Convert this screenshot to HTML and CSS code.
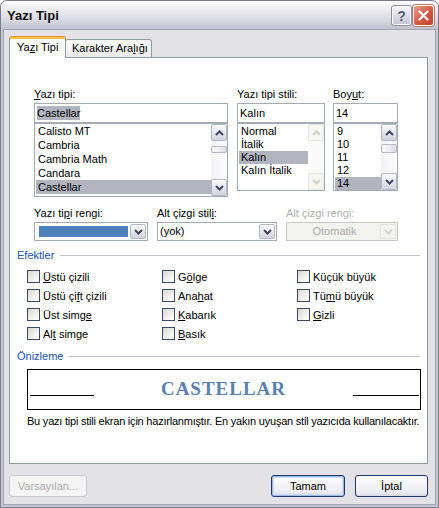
FILE: index.html
```html
<!DOCTYPE html>
<html lang="tr">
<head>
    <meta charset="UTF-8">
    <meta name="viewport" content="width=device-width, initial-scale=1.0">
    <title>Yazı Tipi</title>
    <link rel="stylesheet" href="styles.css">
</head>
<body>

<div class="window">
    <!-- Başlık çubuğu -->
    <div class="titlebar">
        <span class="title">Yazı Tipi</span>
        <div class="caption-buttons">
            <span class="cap-btn help">?</span>
            <span class="cap-btn close">
                <svg width="11" height="11" viewBox="0 0 11 11"><path d="M1.5 1.5 L9.5 9.5 M9.5 1.5 L1.5 9.5" stroke="#fff" stroke-width="2.2" stroke-linecap="round"/></svg>
            </span>
        </div>
    </div>

    <div class="client">
        <!-- Sekmeler -->
        <div class="tabs">
            <div class="tab active">Ya<u>z</u>ı Tipi</div>
            <div class="tab">Karakter Ara<u>l</u>ığı</div>
        </div>

        <div class="panel">
            <!-- Yazı tipi / stil / boyut -->
            <div class="font-pick">
                <div class="col col-font">
                    <label><u>Y</u>azı tipi:</label>
                    <div class="edit"><span class="sel-text">Castellar</span></div>
                    <div class="listbox list-font">
                        <div class="items">
                            <div class="item">Calisto MT</div>
                            <div class="item">Cambria</div>
                            <div class="item">Cambria Math</div>
                            <div class="item">Candara</div>
                            <div class="item selected">Castellar</div>
                        </div>
                        <div class="vscroll">
                            <div class="sb-btn"><svg width="9" height="6" viewBox="0 0 9 6"><path d="M1 5 L4.5 1.5 L8 5" fill="none" stroke="#3d4660" stroke-width="2"/></svg></div>
                            <div class="sb-track"><div class="sb-thumb thumb-font"></div></div>
                            <div class="sb-btn"><svg width="9" height="6" viewBox="0 0 9 6"><path d="M1 1 L4.5 4.5 L8 1" fill="none" stroke="#3d4660" stroke-width="2"/></svg></div>
                        </div>
                    </div>
                </div>

                <div class="col col-style">
                    <label>Yazı tipi stili:</label>
                    <div class="edit">Kalın</div>
                    <div class="listbox list-small">
                        <div class="items">
                            <div class="item">Normal</div>
                            <div class="item">İtalik</div>
                            <div class="item selected">Kalın</div>
                            <div class="item">Kalın İtalik</div>
                        </div>
                        <div class="vscroll disabled">
                            <div class="sb-btn"><svg width="9" height="6" viewBox="0 0 9 6"><path d="M1 5 L4.5 1.5 L8 5" fill="none" stroke="#cfd2c6" stroke-width="2"/></svg></div>
                            <div class="sb-track"></div>
                            <div class="sb-btn"><svg width="9" height="6" viewBox="0 0 9 6"><path d="M1 1 L4.5 4.5 L8 1" fill="none" stroke="#cfd2c6" stroke-width="2"/></svg></div>
                        </div>
                    </div>
                </div>

                <div class="col col-size">
                    <label>Boy<u>u</u>t:</label>
                    <div class="edit">14</div>
                    <div class="listbox list-small">
                        <div class="items">
                            <div class="item">9</div>
                            <div class="item">10</div>
                            <div class="item">11</div>
                            <div class="item">12</div>
                            <div class="item selected">14</div>
                        </div>
                        <div class="vscroll">
                            <div class="sb-btn"><svg width="9" height="6" viewBox="0 0 9 6"><path d="M1 5 L4.5 1.5 L8 5" fill="none" stroke="#3d4660" stroke-width="2"/></svg></div>
                            <div class="sb-track"><div class="sb-thumb thumb-size"></div></div>
                            <div class="sb-btn"><svg width="9" height="6" viewBox="0 0 9 6"><path d="M1 1 L4.5 4.5 L8 1" fill="none" stroke="#3d4660" stroke-width="2"/></svg></div>
                        </div>
                    </div>
                </div>
            </div>

            <!-- Renk ve alt çizgi -->
            <div class="combo-row">
                <div class="col col-color">
                    <label>Yazı ti<u>p</u>i rengi:</label>
                    <div class="combo">
                        <span class="swatch"></span>
                        <span class="drop-btn"><svg width="9" height="6" viewBox="0 0 9 6"><path d="M1 1 L4.5 4.5 L8 1" fill="none" stroke="#3d4660" stroke-width="2"/></svg></span>
                    </div>
                </div>
                <div class="col col-uline">
                    <label>Alt çizgi stil<u>i</u>:</label>
                    <div class="combo">
                        <span class="combo-text">(yok)</span>
                        <span class="drop-btn"><svg width="9" height="6" viewBox="0 0 9 6"><path d="M1 1 L4.5 4.5 L8 1" fill="none" stroke="#3d4660" stroke-width="2"/></svg></span>
                    </div>
                </div>
                <div class="col col-ucolor">
                    <label class="disabled-text">Alt çizgi rengi:</label>
                    <div class="combo disabled">
                        <span class="combo-text center">Otomatik</span>
                        <span class="drop-btn"><svg width="9" height="6" viewBox="0 0 9 6"><path d="M1 1 L4.5 4.5 L8 1" fill="none" stroke="#d4d4d4" stroke-width="2"/></svg></span>
                    </div>
                </div>
            </div>

            <!-- Efektler -->
            <div class="group-head head-effects"><span>Efektler</span><i class="rule"></i></div>
            <div class="effects">
                <div class="check"><span class="box"></span><span><u>Ü</u>stü çizili</span></div>
                <div class="check"><span class="box"></span><span>G<u>ö</u>lge</span></div>
                <div class="check"><span class="box"></span><span>Küçük büyük</span></div>
                <div class="check"><span class="box"></span><span>Üstü çi<u>f</u>t çizili</span></div>
                <div class="check"><span class="box"></span><span>Ana<u>h</u>at</span></div>
                <div class="check"><span class="box"></span><span>Tü<u>m</u>ü büyük</span></div>
                <div class="check"><span class="box"></span><span>Üst simg<u>e</u></span></div>
                <div class="check"><span class="box"></span><span><u>K</u>abarık</span></div>
                <div class="check"><span class="box"></span><span><u>G</u>izli</span></div>
                <div class="check"><span class="box"></span><span>Al<u>t</u> simge</span></div>
                <div class="check"><span class="box"></span><span><u>B</u>asık</span></div>
            </div>

            <!-- Önizleme -->
            <div class="group-head head-preview"><span>Önizleme</span><i class="rule"></i></div>
            <div class="preview">
                <span class="pv-line pv-left"></span>
                <span class="pv-text">CASTELLAR</span>
                <span class="pv-line pv-right"></span>
            </div>
            <p class="note">Bu yazı tipi stili ekran için hazırlanmıştır. En yakın uyuşan stil yazıcıda kullanılacaktır.</p>
        </div>

        <!-- Alt düğmeler -->
        <div class="buttons">
            <button class="btn btn-default" disabled>Varsayılan...</button>
            <span class="spacer"></span>
            <button class="btn btn-ok">Tamam</button>
            <button class="btn btn-cancel">İptal</button>
        </div>
    </div>
</div>

</body>
</html>
```

FILE: styles.css
```css
body {
    margin: 0;
    background: #fff;
    font-family: "Liberation Sans", Arial, sans-serif;
    font-size: 11px;
    color: #000;
}
u {
    text-decoration: underline;
    text-underline-offset: 1px;
}
.window {
    width: 439px;
    height: 508px;
    box-sizing: border-box;
    display: flex;
    flex-direction: column;
    background: #c6c6d2;
    border: 1px solid #7c7c8c;
    border-radius: 7px 7px 0 0;
    overflow: hidden;
}
.titlebar {
    height: 29px;
    flex: none;
    display: flex;
    align-items: center;
    padding: 0 4px 0 6px;
    background: linear-gradient(#fdfdfe 0%, #ececf1 30%, #d6d6df 70%, #bfbfcc 100%);
}
.title {
    flex: 1;
    font-family: "Liberation Sans", sans-serif;
    font-weight: bold;
    font-size: 13px;
    color: #111;
}
.caption-buttons {
    display: flex;
    gap: 1px;
}
.cap-btn {
    width: 21px;
    height: 21px;
    box-sizing: border-box;
    border-radius: 3px;
    display: flex;
    align-items: center;
    justify-content: center;
}
.help {
    border: 1px solid #8d8da3;
    background: linear-gradient(#f6f6fa, #c3c3d3);
    box-shadow: inset 0 0 0 1px #fff;
    font-family: "Liberation Sans", sans-serif;
    font-weight: bold;
    font-size: 14px;
    color: #55607c;
}
.close {
    border: 1px solid #fff;
    background: linear-gradient(135deg, #eba08e, #d2533f 60%, #c4453a);
    box-shadow: 0 0 0 1px #b07a7a;
}
.client {
    flex: 1;
    margin: 0 3px 3px;
    padding: 6px 7px 0 5px;
    background: #e2e2e7;
    box-shadow: 0 0 0 1px #a3a3b3;
}
.tabs {
    display: flex;
    align-items: flex-end;
    height: 21px;
}
.tab {
    box-sizing: border-box;
    height: 18px;
    line-height: 16px;
    border: 1px solid #919b9c;
    border-bottom: none;
    border-radius: 3px 3px 0 0;
    background: linear-gradient(#ffffff, #ebebf0);
    padding-left: 6px;
    width: 87px;
}
.tab.active {
    position: relative;
    z-index: 1;
    width: 57px;
    height: 22px;
    margin-bottom: -1px;
    line-height: 21px;
    padding-left: 7px;
    background: #fff;
    border-top: 1px solid #e68b2c;
    box-shadow: inset 0 2px 0 #ffc83c;
    margin-right: -1px;
}
.panel {
    box-sizing: border-box;
    height: 407px;
    border: 1px solid #919b9c;
    background: #fff;
    padding: 29px 7px 0;
}
label {
    display: block;
    height: 14px;
    line-height: 14px;
    margin-bottom: 2px;
    white-space: nowrap;
}
.disabled-text {
    color: #b1b1b1;
}
.font-pick {
    display: flex;
    margin-left: 17px;
}
.col-font {
    width: 194px;
    margin-right: 9px;
}
.col-style {
    width: 88px;
    margin-right: 8px;
}
.col-size {
    width: 65px;
}
.edit {
    box-sizing: border-box;
    height: 20px;
    line-height: 18px;
    border: 1px solid #a5acb5;
    padding-left: 2px;
}
.sel-text {
    background: #b2b4bf;
    padding: 1px 0;
}
.listbox {
    box-sizing: border-box;
    display: flex;
    border: 1px solid #a5acb5;
    height: 68px;
}
.list-font {
    height: 74px;
}
.items {
    flex: 1;
    overflow: hidden;
}
.item {
    height: 14px;
    line-height: 14px;
    padding-left: 2px;
    margin-left: 1px;
    white-space: nowrap;
}
.list-small .items {
    padding-top: 1px;
}
.list-small .item {
    height: 13px;
    line-height: 13px;
}
.item.selected {
    background: #b2b4bf;
}
.vscroll {
    width: 16px;
    display: flex;
    flex-direction: column;
    background: linear-gradient(to right, #f2f2f5, #fdfdfe);
}
.sb-btn {
    height: 17px;
    flex: none;
    box-sizing: border-box;
    border: 1px solid #b5b7c8;
    border-radius: 2px;
    background: linear-gradient(#fbfbfd, #d2d3de);
    display: flex;
    align-items: center;
    justify-content: center;
}
.sb-track {
    flex: 1;
}
.sb-thumb {
    box-sizing: border-box;
    border: 1px solid #b5b7c8;
    border-radius: 2px;
    background: linear-gradient(to right, #fdfdfe, #dcdce5);
}
.thumb-font {
    margin-top: 5px;
    height: 7px;
}
.thumb-size {
    margin-top: 3px;
    height: 9px;
}
.vscroll.disabled {
    background: #fafaf8;
}
.vscroll.disabled .sb-btn {
    border-color: #e6e6e0;
    background: #f7f7f4;
}
.combo-row {
    display: flex;
    margin: 9px 0 0 17px;
}
.col-color {
    width: 114px;
    margin-right: 9px;
}
.col-uline {
    width: 120px;
    margin-right: 9px;
}
.col-ucolor {
    width: 112px;
}
.combo {
    box-sizing: border-box;
    height: 19px;
    border: 1px solid #a5acb5;
    padding: 1px;
    display: flex;
    align-items: stretch;
}
.swatch {
    flex: 1;
    margin: 2px 2px 2px 3px;
    background: #4f81bd;
}
.combo-text {
    flex: 1;
    line-height: 15px;
    padding-left: 1px;
}
.combo-text.center {
    text-align: center;
    color: #acacac;
}
.drop-btn {
    width: 16px;
    box-sizing: border-box;
    border: 1px solid #b5b7c8;
    border-radius: 2px;
    background: linear-gradient(#fbfbfd, #d2d3de);
    display: flex;
    align-items: center;
    justify-content: center;
}
.combo.disabled {
    border-color: #cacac4;
    background: #f3f3ef;
}
.combo.disabled .drop-btn {
    border-color: #e4e4de;
    background: #f3f3ef;
}
.group-head {
    display: flex;
    align-items: center;
    height: 14px;
    color: #2353b3;
}
.head-effects {
    margin-top: 7px;
}
.head-preview {
    margin-top: 6px;
}
.rule {
    flex: 1;
    height: 1px;
    margin-left: 6px;
    background: #c4c4cf;
}
.effects {
    display: grid;
    grid-template-columns: 135px 135px auto;
    grid-auto-rows: 19px;
    margin: 5px 0 0 10px;
}
.check {
    display: flex;
    align-items: center;
    white-space: nowrap;
}
.box {
    width: 13px;
    height: 13px;
    box-sizing: border-box;
    margin-right: 3px;
    border: 1px solid #3b4a66;
    background: linear-gradient(135deg, #d7d7d2, #f6f6f4 70%, #fff);
}
.preview {
    box-sizing: border-box;
    display: flex;
    align-items: flex-start;
    width: 394px;
    height: 41px;
    margin: 6px 0 0 10px;
    border: 1px solid #000;
}
.pv-line {
    height: 26px;
    box-sizing: border-box;
    border-bottom: 1px solid #000;
}
.pv-left {
    width: 64px;
    margin-left: 2px;
}
.pv-right {
    width: 66px;
    margin-right: 1px;
}
.pv-text {
    flex: 1;
    text-align: center;
    margin-top: 11px;
    line-height: 16px;
    font-family: "Liberation Serif", serif;
    font-weight: bold;
    font-size: 19px;
    letter-spacing: 1px;
    color: #5b80b2;
}
.note {
    margin: 4px 0 0 10px;
    line-height: 14px;
    letter-spacing: -0.22px;
    white-space: nowrap;
}
.buttons {
    display: flex;
    margin-top: 11px;
}
.spacer {
    flex: 1;
}
.btn {
    height: 22px;
    box-sizing: border-box;
    border: 1px solid #1f3a68;
    border-radius: 3px;
    background: linear-gradient(#ffffff, #ececf2 80%, #d8d8e2);
    font-family: inherit;
    font-size: 11px;
    color: #000;
    padding: 0;
}
.btn-default {
    width: 78px;
    border-color: #c9c9cf;
    background: #f5f5f5;
    color: #acacac;
}
.btn-ok {
    width: 74px;
    margin-right: 10px;
    box-shadow: inset 0 0 0 1px #9fbbe6, inset 0 0 0 2px #cfdcf2;
}
.btn-cancel {
    width: 73px;
}
```
